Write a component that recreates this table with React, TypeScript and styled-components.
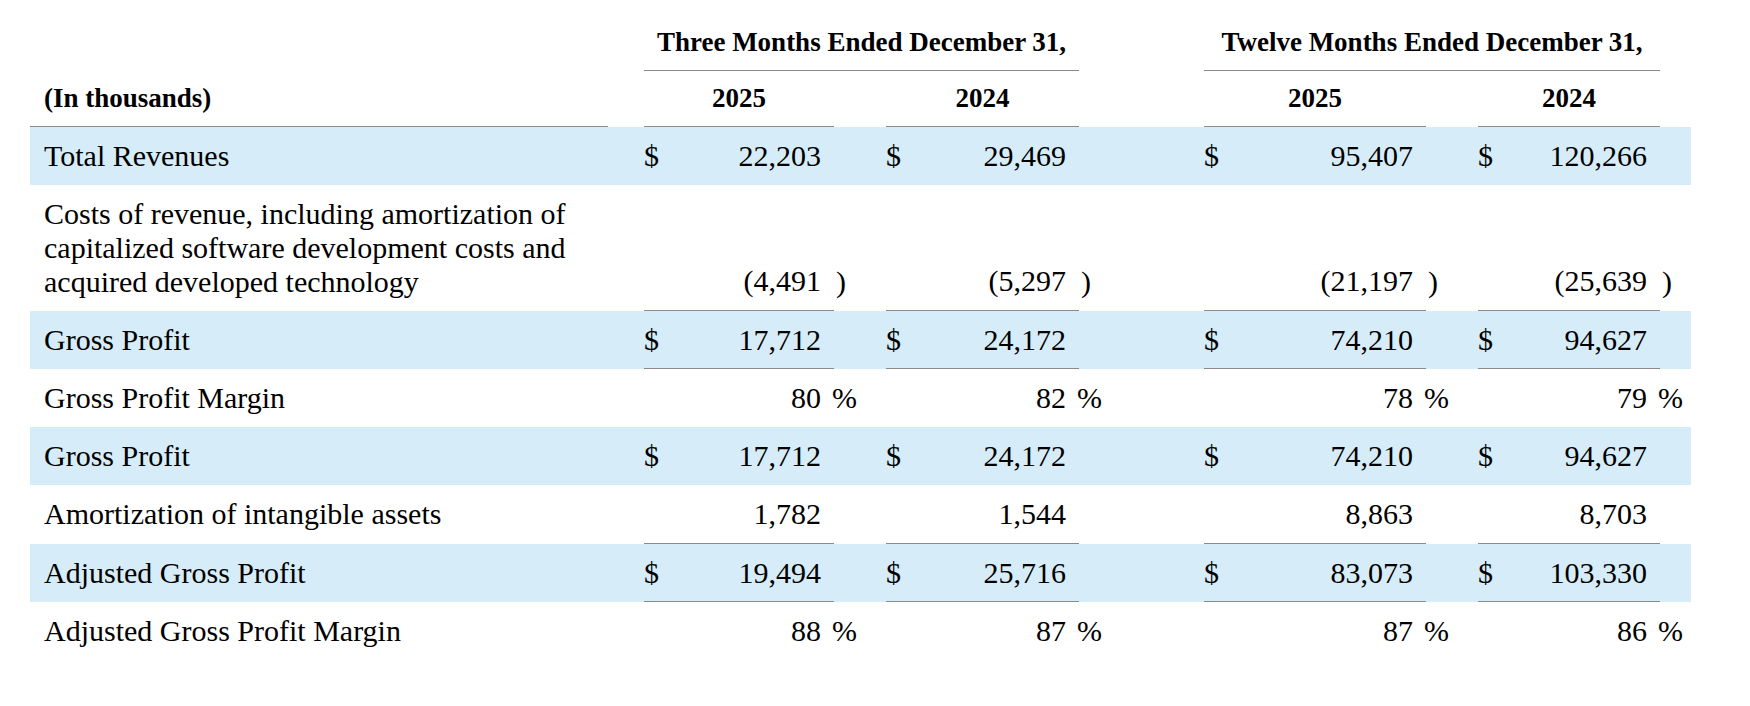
import React from 'react';
import styled, { createGlobalStyle } from 'styled-components';

const GlobalStyle = createGlobalStyle`
  html, body {
    margin: 0;
    padding: 0;
    background: #ffffff;
  }

  body {
    font-family: "Liberation Serif", "Times New Roman", Times, serif;
    color: #000000;
  }
`;

const RULE = '1px solid #8a8a8a';
const SHADE = '#d6edf9';

const Page = styled.div`
  padding: 15px 0 0 30px;
`;

const Table = styled.table`
  border-collapse: separate;
  border-spacing: 0;
  table-layout: fixed;
  width: 1661px;
  font-size: 30px;
`;

const Col = styled.col<{ $w: number }>`
  width: ${p => p.$w}px;
`;

const HeadCell = styled.th<{ $rule?: boolean; $left?: boolean }>`
  font-size: 27px;
  font-weight: bold;
  line-height: 31px;
  padding: 12px 0 12px ${p => (p.$left ? '14px' : '0')};
  text-align: ${p => (p.$left ? 'left' : 'center')};
  vertical-align: bottom;
  white-space: nowrap;
  border-bottom: ${p => (p.$rule ? RULE : 'none')};
`;

const Row = styled.tr<{ $shade?: boolean }>`
  background: ${p => (p.$shade ? SHADE : 'transparent')};
`;

const LabelCell = styled.td`
  padding: 12px 0 11.75px 14px;
  line-height: 34px;
  vertical-align: top;
`;

const GapCell = styled.td`
  padding: 0;
`;

const ValueCell = styled.td<{ $rule?: boolean }>`
  padding: 12px 13px 11.75px 0;
  line-height: 34px;
  vertical-align: bottom;
  white-space: nowrap;
  border-bottom: ${p => (p.$rule ? RULE : 'none')};
`;

const ValueBox = styled.div`
  display: flex;
  justify-content: space-between;
  align-items: baseline;
`;

const Amount = styled.span`
  margin-left: auto;
`;

const SuffixCell = styled.td<{ $paren?: boolean }>`
  padding: 12px 0 11.75px ${p => (p.$paren ? '2px' : '0')};
  line-height: 34px;
  vertical-align: bottom;
  white-space: nowrap;
`;

const Percent = styled.span`
  margin-left: -2px;
`;

type Line = {
  label: string;
  values: string[];
  shade?: boolean;
  dollar?: boolean;
  rule?: boolean;
  suffix?: ')' | '%';
};

const widths = [578, 36, 190, 52, 193, 125, 222, 52, 182, 31];

const lines: Line[] = [
  { label: 'Total Revenues', shade: true, dollar: true, values: ['22,203', '29,469', '95,407', '120,266'] },
  {
    label:
      'Costs of revenue, including amortization of capitalized software development costs and acquired developed technology',
    rule: true,
    suffix: ')',
    values: ['(4,491', '(5,297', '(21,197', '(25,639'],
  },
  { label: 'Gross Profit', shade: true, dollar: true, rule: true, values: ['17,712', '24,172', '74,210', '94,627'] },
  { label: 'Gross Profit Margin', suffix: '%', values: ['80', '82', '78', '79'] },
  { label: 'Gross Profit', shade: true, dollar: true, values: ['17,712', '24,172', '74,210', '94,627'] },
  { label: 'Amortization of intangible assets', rule: true, values: ['1,782', '1,544', '8,863', '8,703'] },
  { label: 'Adjusted Gross Profit', shade: true, dollar: true, rule: true, values: ['19,494', '25,716', '83,073', '103,330'] },
  { label: 'Adjusted Gross Profit Margin', suffix: '%', values: ['88', '87', '87', '86'] },
];

const years = ['2025', '2024', '2025', '2024'];

const App = () => {
  return (
    <Page>
      <GlobalStyle />
      <Table>
        <colgroup>
          {widths.map((w, i) => (
            <Col key={i} $w={w} />
          ))}
        </colgroup>
        <thead>
          <tr>
            <HeadCell colSpan={2} />
            <HeadCell colSpan={3} $rule>
              Three Months Ended December 31,
            </HeadCell>
            <HeadCell />
            <HeadCell colSpan={3} $rule>
              Twelve Months Ended December 31,
            </HeadCell>
            <HeadCell />
          </tr>
          <tr>
            <HeadCell $left $rule>
              (In thousands)
            </HeadCell>
            <HeadCell />
            {years.map((y, i) => (
              <React.Fragment key={i}>
                <HeadCell $rule>{y}</HeadCell>
                <HeadCell />
              </React.Fragment>
            ))}
          </tr>
        </thead>
        <tbody>
          {lines.map((line, r) => (
            <Row key={r} $shade={line.shade}>
              <LabelCell>{line.label}</LabelCell>
              <GapCell />
              {line.values.map((v, i) => (
                <React.Fragment key={i}>
                  <ValueCell $rule={line.rule}>
                    <ValueBox>
                      {line.dollar && <span>$</span>}
                      <Amount>{v}</Amount>
                    </ValueBox>
                  </ValueCell>
                  <SuffixCell $paren={line.suffix === ')'}>
                    {line.suffix === '%' ? <Percent>%</Percent> : line.suffix}
                  </SuffixCell>
                </React.Fragment>
              ))}
            </Row>
          ))}
        </tbody>
      </Table>
    </Page>
  );
};

export default App;
